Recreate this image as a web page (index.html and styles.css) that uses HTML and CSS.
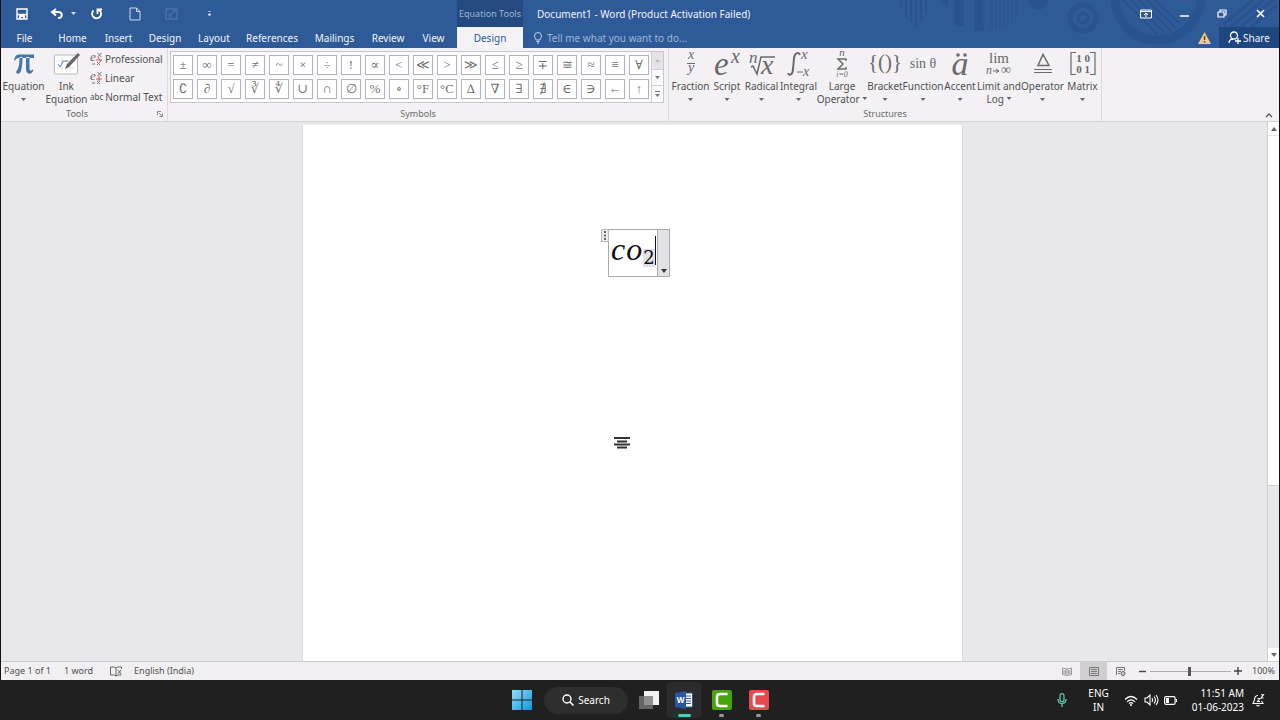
FILE: index.html
```
<!DOCTYPE html>
<html lang="en">
<head>
<meta charset="utf-8">
<title>Document1 - Word</title>
<link rel="stylesheet" href="styles.css">
</head>
<body>
<div class="word">
  <header class="top">
    <svg class="art" width="380" height="47" viewBox="0 0 380 47" fill="none" stroke="#29538f" aria-hidden="true">
      <path d="M2 0v7M7 0v17M12 0v23M17 0v26M22 0v22M27 0v14" stroke-width="2"/>
      <path d="M42 0l7 8V0z" fill="#29538f" stroke="none"/>
      <path d="M60 0v26M80 0v31" stroke-width="9"/>
      <path d="M93 0v30M97 0v30M101 0v29M105 0v28M109 0v26M113 0v23M117 0v19" stroke-width="1"/>
      <circle cx="139" cy="0" r="10" fill="#29538f" stroke="none"/>
      <circle cx="184" cy="18" r="13" stroke-width="5"/><circle cx="184" cy="18" r="5" stroke-width="3"/>
      <path d="M216 0c2 20 16 40 42 40s42-20 44-40" stroke-width="9"/>
      <path d="M224 0l34 34M232 0l34 33M240 0l32 31M248 0l29 28M256 0l26 25" stroke-width="2"/>
      <path d="M324 25l30-25M332 27l32-27M342 27l32-27M352 27l26-22" stroke-width="3"/>
    </svg>
    <div class="quick">
      <button aria-label="Save"><svg width="12" height="12" viewBox="0 0 12 12"><path d="M1 1h10v10H1zM1 6.500h10" fill="none" stroke="#fff" stroke-width="1.400"/><path d="M3 7h6v4H7V9H5v2H3z" fill="#fff"/></svg></button>
      <button aria-label="Undo"><svg width="14" height="12" viewBox="0 0 14 12"><path d="M6 1L2 4l4 3.500M2 4h6c5 0 5 6 0 6" fill="none" stroke="#fff" stroke-width="2"/></svg></button>
      <button aria-label="Undo list"><svg width="5" height="3"><path d="M0 0h5L2.500 3z" fill="#dbe5f3"/></svg></button>
      <button aria-label="Redo"><svg width="13" height="13" viewBox="0 0 13 13"><path d="M3.500 3.500a4.500 4.500 0 1 0 5-.8M7.500 7V2.500H12" fill="none" stroke="#fff" stroke-width="1.800"/></svg></button>
      <button aria-label="New document"><svg width="12" height="14" viewBox="0 0 12 14"><path d="M1 1h6.500L11 4.500V13H1zM7.500 1v3.500H11" fill="none" stroke="#cfdcee"/></svg></button>
      <button aria-label="Edit" disabled><svg width="13" height="12" viewBox="0 0 13 12"><path d="M1 1h11v10H1zM4 8l7-6M4 6l2 3" fill="none" stroke="#4b72aa" stroke-width="1.300"/></svg></button>
      <button aria-label="Customize toolbar"><svg width="5" height="6"><path d="M1 .5h3M1 3h3L2.500 5z" fill="#dbe5f3" stroke="#dbe5f3" stroke-width=".6"/></svg></button>
    </div>
    <div class="context">Equation Tools</div>
    <div class="title">Document1 - Word (Product Activation Failed)</div>
    <div class="window">
      <button aria-label="Ribbon display options"><svg width="12" height="10" viewBox="0 0 12 10"><path d="M.5 1h11v8H.5zM.5 2.500h11M6 8V4M4 6l2-2 2 2" fill="none" stroke="#fff"/></svg></button>
      <button aria-label="Minimize"><svg width="9" height="10"><path d="M0 7h9" stroke="#fff" stroke-width="1.500"/></svg></button>
      <button aria-label="Restore"><svg width="10" height="9" viewBox="0 0 10 9"><path d="M1 3h6v5H1zM3 3V1h6v5H7" fill="none" stroke="#fff" stroke-width="1.200"/></svg></button>
      <button aria-label="Close"><svg width="9" height="9"><path d="M1 1l7 7M8 1L1 8" stroke="#fff" stroke-width="1.700"/></svg></button>
    </div>
    <nav class="tabs">
      <button>File</button><button>Home</button><button>Insert</button><button>Design</button><button>Layout</button><button>References</button><button>Mailings</button><button>Review</button><button>View</button>
    </nav>
    <button class="active-tab">Design</button>
    <label class="tell">
      <svg width="10" height="12" viewBox="0 0 10 12"><path d="M3 8C3 6.500 1.500 6 1.500 4a3.500 3.500 0 0 1 7 0c0 2-1.500 2.500-1.500 4zM3.500 9.500h3M4 11h2" fill="none" stroke="#c3d2e8"/></svg>
      <input type="text" aria-label="Tell me" placeholder="Tell me what you want to do...">
    </label>
    <div class="account">
      <svg width="13" height="12" viewBox="0 0 13 12"><path d="M6.500 0L13 12H0z" fill="#efc987"/><path d="M6.500 4v4M6.500 9v1.500" stroke="#5a3f20" stroke-width="1.400"/></svg>
      <button class="share"><svg width="13" height="13" viewBox="0 0 13 13"><circle cx="6" cy="4.500" r="3.500" fill="none" stroke="#fff" stroke-width="1.300"/><path d="M1 12c0-3 2-4 4-4M7 10h6M10 7v6" fill="none" stroke="#fff" stroke-width="1.300"/></svg>Share</button>
    </div>
  </header>

  <section class="ribbon">
    <div class="group tools">
      <div class="tool-row">
        <button class="big"><svg width="22" height="22" viewBox="0 0 22 22"><path d="M1 7C2 2.500 4 1.500 7 1.500h14v3.500H7C4 5 3 5.500 2 7.500zM6.500 4c0 7-.5 11-3.500 15 1 3 4 2 5-1 1-4 1.500-9 1.500-14zM13 4v12c0 6 6 6 7.500 1l-1-.5c-1.500 2-3 1.500-3-1.500V4z" fill="#4576a8"/></svg><span>Equation</span><i class="caret"></i></button>
        <button class="big"><svg width="26" height="24" viewBox="0 0 26 24"><rect x=".5" y="3" width="23" height="19" rx="1" fill="#fff" stroke="#b9b9bb"/><path d="M3 9h18M3 16h18M8 5v15M16 5v15" stroke="#e3e3e5"/><path d="M4 12l2 3 3-6h5" fill="none" stroke="#5d86ad"/><path d="M24 1l2 2-11 12-4 2 2-5z" fill="#666"/></svg><span>Ink<br>Equation</span></button>
        <div class="small">
          <button><svg width="13" height="14" viewBox="0 0 13 14"><text x="0" y="9" class="ic" font-size="13">e</text><path d="M7.500 1l4 4M11.500 1l-4 4" stroke="#777"/><path d="M6 8h6M8 5l3 5" stroke="#cc5560"/><path d="M2 12h3M7 10l3 3M10 10l-3 3" stroke="#777"/></svg>Professional</button>
          <button><svg width="13" height="14" viewBox="0 0 13 14"><text x="0" y="9" class="ic" font-size="13">e</text><path d="M7.500 1l4 4M11.500 1l-4 4" stroke="#777"/><path d="M6 8h6M9 5v5" stroke="#cc5560"/><path d="M2 12h3M7 10l3 3M10 10l-3 3" stroke="#777"/></svg>Linear</button>
          <button><span class="abc">abc</span>Normal Text</button>
        </div>
      </div>
      <div class="name">Tools</div>
      <svg class="launch" width="6" height="6" viewBox="0 0 6 6"><path d="M.5 4V.5H4M2 2l3 3M5.500 2.500v3h-3" fill="none" stroke="#888"/></svg>
    </div>

    <div class="group symbols">
      <div class="gallery">
        <div class="cells">
          <button>±</button><button>∞</button><button>=</button><button>≠</button><button>~</button><button>×</button><button>÷</button><button>!</button><button>∝</button><button>&lt;</button><button>≪</button><button>&gt;</button><button>≫</button><button>≤</button><button>≥</button><button>∓</button><button>≅</button><button>≈</button><button>≡</button><button>∀</button>
          <button>∁</button><button>∂</button><button>√</button><button>∛</button><button>∜</button><button>∪</button><button>∩</button><button>∅</button><button>%</button><button>∘</button><button>°F</button><button>°C</button><button>∆</button><button>∇</button><button>∃</button><button>∄</button><button>∈</button><button>∋</button><button>←</button><button>↑</button>
        </div>
        <div class="scroll">
          <button aria-label="Up" disabled><svg width="5" height="3"><path d="M0 3h5L2.500 0z" fill="#bbb"/></svg></button>
          <button aria-label="Down"><svg width="5" height="3"><path d="M0 0h5L2.500 3z" fill="#777"/></svg></button>
          <button aria-label="More"><svg width="5" height="6"><path d="M0 .5h5" stroke="#777"/><path d="M0 3h5L2.500 6z" fill="#777"/></svg></button>
        </div>
      </div>
      <div class="name">Symbols</div>
    </div>

    <div class="group structures">
      <div class="struct-row">
        <button><svg width="14" height="26" viewBox="0 0 14 26"><text x="7" y="8" class="ic mid" font-size="14">x</text><path d="M3 12.500h8" stroke="#6a6a6a"/><text x="7" y="21" class="ic mid" font-size="14">y</text></svg><span>Fraction</span><i class="caret"></i></button>
        <button><svg width="28" height="26" viewBox="0 0 28 26"><text x="1" y="24" class="ic" font-size="33">e</text><text x="18" y="12" class="ic" font-size="20">x</text></svg><span>Script</span><i class="caret"></i></button>
        <button><svg width="28" height="26" viewBox="0 0 28 26"><text x="1" y="12" class="ic" font-size="17">n</text><path d="M3 16l2-1 4 8 4-17h14" fill="none" stroke="#6a6a6a" stroke-width="1.500"/><text x="13" y="23" class="ic" font-size="28">x</text></svg><span>Radical</span><i class="caret"></i></button>
        <button><svg width="24" height="26" viewBox="0 0 24 26"><path d="M13 4c-1-3-5-3-6 3L6 18c0 6-4 7-5 4" fill="none" stroke="#6a6a6a" stroke-width="2"/><text x="14" y="8" class="ic" font-size="15">x</text><path d="M10 21h6" stroke="#6a6a6a"/><text x="16" y="25" class="ic" font-size="14">x</text></svg><span>Integral</span><i class="caret"></i></button>
        <button><svg width="16" height="26" viewBox="0 0 16 26"><text x="8" y="5" class="ic mid" font-size="11">n</text><path d="M12 10V8H4l5 5-5 5h8v-2" fill="none" stroke="#6a6a6a" stroke-width="1.500"/><text x="8" y="26" class="ic mid" font-size="8">i=0</text></svg><span>Large<br>Operator <i class="caret"></i></span></button>
        <button><svg width="30" height="26" viewBox="0 0 30 26"><text x="15" y="18" class="ic up mid" font-size="21">{()}</text></svg><span>Bracket</span><i class="caret"></i></button>
        <button><svg width="28" height="26" viewBox="0 0 28 26"><text x="14" y="17" class="ic up mid" font-size="14">sin θ</text></svg><span>Function</span><i class="caret"></i></button>
        <button><svg width="20" height="26" viewBox="0 0 20 26"><text x="10" y="24" class="ic mid" font-size="34">a</text><circle cx="8" cy="4" r="1.800" fill="#6a6a6a"/><circle cx="15" cy="4" r="1.800" fill="#6a6a6a"/></svg><span>Accent</span><i class="caret"></i></button>
        <button><svg width="28" height="26" viewBox="0 0 28 26"><text x="14" y="12" class="ic up mid" font-size="15">lim</text><text x="1" y="23" class="ic" font-size="12">n</text><path d="M8 20h6M11 18l3 2-3 2" stroke="#6a6a6a" fill="none"/><text x="16" y="23" class="ic up" font-size="14">∞</text></svg><span>Limit and<br>Log <i class="caret"></i></span></button>
        <button><svg width="20" height="26" viewBox="0 0 20 26"><path d="M5 14.500l5-11 6 11z" fill="none" stroke="#6a6a6a" stroke-width="1.500"/><path d="M1 18.500h18M1 21.500h18" stroke="#6a6a6a"/></svg><span>Operator</span><i class="caret"></i></button>
        <button><svg width="26" height="26" viewBox="0 0 26 26"><path d="M6 1.500H1v22h5M20 1.500h5v22h-5" fill="none" stroke="#6a6a6a" stroke-width="1.200"/><text x="13" y="11" class="ic up bold mid" font-size="11">1 0</text><text x="13" y="22" class="ic up bold mid" font-size="11">0 1</text></svg><span>Matrix</span><i class="caret"></i></button>
      </div>
      <div class="name">Structures</div>
    </div>
    <button class="collapse" aria-label="Collapse ribbon"><svg width="8" height="5"><path d="M1 4l3-3 3 3" fill="none" stroke="#555" stroke-width="1.300"/></svg></button>
  </section>

  <main class="workspace">
    <div class="canvas">
      <article class="page">
        <div class="equation">
          <button class="handle" aria-label="Move equation"><svg width="2" height="9"><path d="M0 0h2v2H0zM0 3.500h2v2H0zM0 7h2v2H0z" fill="#666"/></svg></button>
          <div class="formula"><span>c</span><span>o</span><span class="sub">2</span></div>
          <button class="options" aria-label="Equation options"><svg width="6" height="4"><path d="M0 0h6L3 4z" fill="#333"/></svg></button>
        </div>
        <svg class="pointer" width="16" height="12"><path d="M0 1h16M3 4.500h10M0 7.500h16M3 10.500h10" stroke="#333" stroke-width="1.800"/></svg>
      </article>
    </div>
    <div class="scrollbar">
      <button aria-label="Scroll up"><svg width="6" height="4"><path d="M0 4h6L3 0z" fill="#666"/></svg></button>
      <div class="thumb"></div>
      <button aria-label="Scroll down"><svg width="6" height="4"><path d="M0 0h6L3 4z" fill="#666"/></svg></button>
    </div>
  </main>

  <footer class="status">
    <span>Page 1 of 1</span><span>1 word</span>
    <svg width="12" height="11" viewBox="0 0 12 11"><path d="M6 2C4 .5 2 1 .5 1v8c2 0 4-.5 5.500 1V2c1-1.500 3-1 5.500-1v2M6 10c1-1 3-1 5.500-1M8 4l3 4M11 4L8 8" fill="none" stroke="#666"/></svg>
    <span>English (India)</span>
    <div class="view">
      <button aria-label="Read mode"><svg width="10" height="9" viewBox="0 0 10 9"><path d="M5 2L.5 1v6.500L5 8.500l4.500-1V1zM5 2v6M2 3v4M3.500 3v4M6.500 3v4M8 3v4" fill="none" stroke="#777" stroke-width=".7"/></svg></button>
      <button class="on" aria-label="Print layout"><svg width="10" height="9" viewBox="0 0 10 9"><path d="M.5.5h9v8h-9zM2 2.500h6M2 4.500h6M2 6.500h6" fill="none" stroke="#777"/></svg></button>
      <button aria-label="Web layout"><svg width="10" height="9" viewBox="0 0 10 9"><path d="M.5 8V.5h8V4M2 2.500h5M2 4.500h3M2 6.500h2" fill="none" stroke="#777"/><circle cx="7" cy="6.500" r="2" fill="#ccc" stroke="#666"/></svg></button>
      <button class="minus" aria-label="Zoom out"><svg width="7" height="7"><path d="M0 3.500h7" stroke="#444" stroke-width="1.400"/></svg></button>
      <input type="range" min="0" max="100" value="49" aria-label="Zoom">
      <button class="plus" aria-label="Zoom in"><svg width="8" height="8"><path d="M0 4h8M4 0v8" stroke="#444" stroke-width="1.400"/></svg></button>
      <span class="percent">100%</span>
    </div>
  </footer>
</div>

<div class="taskbar">
  <div class="apps">
    <button aria-label="Start"><svg width="20" height="20" viewBox="0 0 20 20"><defs><linearGradient id="w" x2="1" y2="1"><stop stop-color="#86e2fb"/><stop offset="1" stop-color="#1593dc"/></linearGradient></defs><path d="M0 0h9.500v9.500H0zM10.500 0H20v9.500h-9.500zM0 10.500h9.500V20H0zM10.500 10.500H20V20h-9.500z" fill="url(#w)"/></svg></button>
    <button class="search"><svg width="12" height="12" viewBox="0 0 12 12"><circle cx="5" cy="5" r="4" fill="none" stroke="#fff" stroke-width="1.400"/><path d="M8 8l3.500 3.500" stroke="#fff" stroke-width="1.600"/></svg>Search</button>
    <button aria-label="Task view"><svg width="20" height="19" viewBox="0 0 20 19"><path d="M5 0h15v14H5z" fill="#f2f2f2"/><path d="M0 5h14v13H0z" fill="#777" fill-opacity=".8"/></svg></button>
    <button class="current" aria-label="Word"><svg width="18" height="18" viewBox="0 0 18 18"><path d="M8 2h9.500v14H8z" fill="#fff" stroke="#2c5899"/><path d="M11 5h5M11 7.500h5M11 10h5M11 12.500h5" stroke="#2c5899"/><path d="M0 2l11-2v18L0 16z" fill="#2b57a0"/><text x="5.500" y="12" class="logo">W</text></svg></button>
    <button class="running" aria-label="Camtasia"><svg width="20" height="20" viewBox="0 0 20 20"><rect width="20" height="20" rx="2" fill="#45a50b"/><path d="M15.500 4H8Q5 4 5 7v6q0 3 3 3h7.500" fill="none" stroke="#fff" stroke-width="2.600"/></svg></button>
    <button class="running" aria-label="Camtasia Recorder"><svg width="20" height="20" viewBox="0 0 20 20"><rect width="20" height="20" rx="2" fill="#e44a4d"/><path d="M15.500 4H8Q5 4 5 7v6q0 3 3 3h7.500" fill="none" stroke="#fff" stroke-width="2.600"/></svg></button>
  </div>
  <div class="tray">
    <svg width="10" height="14" viewBox="0 0 10 14"><rect x="3" y=".7" width="4" height="8" rx="2" fill="none" stroke="#5fd3b7" stroke-width="1.200"/><path d="M1 6c0 6 8 6 8 0M5 10.500V14" fill="none" stroke="#5fd3b7" stroke-width="1.200"/></svg>
    <div class="lang">ENG<br>IN</div>
    <div class="net">
      <svg width="14" height="11" viewBox="0 0 14 11"><path d="M1 4.500q6-6 12 0M3 6.800q4-4 8 0M5 8.700q2-2 4 0" fill="none" stroke="#fff" stroke-width="1.200"/><circle cx="7" cy="10" r="1" fill="#fff"/></svg>
      <svg width="14" height="12" viewBox="0 0 14 12"><path d="M1 4h2l3-3v10L3 8H1zM8 4q1.500 2 0 4M10 2.500q3 3.500 0 7M12 1q4 5 0 10" fill="none" stroke="#fff" stroke-width="1.100"/></svg>
      <svg width="13" height="9" viewBox="0 0 13 9"><rect x=".6" y=".6" width="10.500" height="7.800" rx="1.500" fill="none" stroke="#fff" stroke-width="1.200"/><path d="M2 2h3v5H2zM12 3h1v3h-1z" fill="#fff"/></svg>
    </div>
    <div class="clock">11:51 AM<br>01-06-2023</div>
    <svg width="12" height="13" viewBox="0 0 12 13"><path d="M6 1.500C3 1.500 2.500 4 2.500 6L1 9.500h10L9.500 7M4.500 11q1.500 2 3 0M5.500 4.500H8l-2.500 3H8M9 .8h2.500L9 4h2.500" fill="none" stroke="#fff" stroke-width="1.100"/></svg>
  </div>
</div>
</body>
</html>
```
FILE: styles.css
```
* { box-sizing: border-box; }
body {
  margin: 0;
  height: 100vh;
  display: flex;
  flex-direction: column;
  background: #202020;
  font: 10px/14px "Noto Sans", "Open Sans", sans-serif;
  color: #505050;
}
button {
  border: 0;
  padding: 0;
  background: none;
  font: inherit;
  color: inherit;
  display: flex;
  align-items: center;
  justify-content: center;
}
svg { display: block; flex: none; overflow: visible; }
.word {
  flex: 1;
  min-height: 0;
  display: flex;
  flex-direction: column;
  border: solid #111;
  border-width: 0 1px;
  background: #f1eff1;
}

/* Title bar and tabs */
.top {
  position: relative;
  display: grid;
  grid-template-columns: 456px 66px 1fr auto;
  grid-template-rows: 27px 21px;
  background: #2f5a98;
  color: #f0f4fa;
}
.art { position: absolute; right: 0; top: 0; overflow: hidden; }
.quick { display: grid; grid-template-columns: 41px 30px 2px 44px 33px 41px 35px; }
.context {
  display: flex;
  align-items: center;
  justify-content: center;
  background: #244a80;
  color: #9db5d6;
  font-size: 9px;
  white-space: nowrap;
}
.title { padding: 7px 0 0 14px; white-space: nowrap; }
.window { position: relative; display: grid; grid-template-columns: repeat(4, 38px); }
.tabs { display: grid; grid-template-columns: 47px 49px 43px 50px 48px 68px 57px 50px 41px; }
.active-tab { background: #f3f2f5; color: #2f5a98; }
.tell { display: flex; align-items: center; gap: 4px; padding-left: 10px; }
.tell input {
  width: 200px;
  border: 0;
  padding: 0;
  background: none;
  font: inherit;
  color: #fff;
}
.tell input::placeholder { color: #9db5d6; opacity: 1; }
.account { position: relative; display: flex; align-items: center; justify-content: flex-end; gap: 8px; }
.share { width: 60px; height: 21px; gap: 2px; background: #1f477f; }

/* Ribbon */
.ribbon { display: flex; height: 74px; border-bottom: 1px solid #d4d2d5; background: #f3f1f4; }
.group {
  position: relative;
  display: flex;
  flex-direction: column;
  border-right: 1px solid #dcdadd;
}
.name { margin-top: auto; font-size: 9px; line-height: 14px; text-align: center; color: #6a6a6a; }
.tools { width: 167px; }
.symbols { width: 501px; }
.structures { width: 433px; }
.tools .name { padding-right: 14px; }
.tool-row { display: grid; grid-template-columns: 45px 41px 1fr; padding-top: 3px; }
.big, .struct-row button { flex-direction: column; justify-content: flex-start; line-height: 13px; }
.big svg { height: 26px; margin-bottom: 3px; }
.big span { text-align: center; }
.small { display: flex; flex-direction: column; gap: 5px; padding: 1px 0 0 3px; }
.small button { justify-content: flex-start; gap: 2px; height: 14px; white-space: nowrap; }
.abc { font-size: 8px; }
.launch { position: absolute; right: 4px; bottom: 4px; }
.caret {
  display: inline-block;
  width: 5px;
  height: 3px;
  background: #666;
  clip-path: polygon(0 0, 100% 0, 50% 100%);
}
button > .caret { margin-top: 5px; }
span > .caret { vertical-align: 3px; }
.ic { font-family: "Liberation Serif", serif; font-style: italic; fill: #6a6a6a; }
.up { font-style: normal; }
.bold { font-weight: bold; }
.mid { text-anchor: middle; }
.gallery {
  display: flex;
  justify-content: space-between;
  width: 494px;
  margin: 3px 0 0 2px;
  border: 1px solid #c9c7ca;
  background: #fbfafc;
}
.cells { display: grid; grid-template-columns: repeat(20, 20px); grid-auto-rows: 20px; gap: 4px; padding: 3px 2px; }
.cells button {
  border: 1px solid #b4b2b6;
  background: #fff;
  font: 13px/16px "Liberation Serif", "DejaVu Serif", serif;
  color: #707070;
}
.scroll { width: 12px; display: grid; grid-template-rows: repeat(3, 1fr); border-left: 1px solid #d0ced1; }
.scroll button + button { border-top: 1px solid #d0ced1; }
.scroll button:disabled { background: #e5e3e6; }
.struct-row {
  display: grid;
  grid-template-columns: 39px 34px 35px 39px 48px 38px 38px 36px 42px 45px 35px;
  padding: 3px 0 0 2px;
}
.struct-row svg { margin-bottom: 3px; }
.struct-row span { text-align: center; white-space: nowrap; }
.collapse { margin: auto 6px 3px auto; }

/* Document */
.workspace { flex: 1; min-height: 0; display: flex; background: #e8e7ea; }
.canvas { flex: 1; display: flex; justify-content: center; padding: 3px 3px 0 0; }
.page { position: relative; width: 661px; background: #fff; border: solid #dbd9dc; border-width: 0 1px; padding: 104px 0 0 305px; }
.equation { position: relative; display: flex; width: 62px; height: 48px; border: 1px solid #a9a9ab; }
.handle { position: absolute; left: -8px; top: -1px; width: 8px; height: 13px; border: 1px solid #b9b9bb; background: #ececee; }
.formula {
  flex: 1;
  display: flex;
  gap: 1px;
  padding-left: 2px;
  font: italic 32px/38px "Liberation Serif", serif;
  color: #111;
}
.sub { font: 18px/18px "DejaVu Serif", serif; height: 18px; margin-top: 19px; background: #e1e1e8; }
.formula::after { content: ""; width: 1px; height: 29px; margin-top: 6px; margin-left: -1px; background: #111; }
.options { align-items: flex-end; width: 12px; padding-bottom: 3px; border-left: 1px solid #a9a9ab; background: #e2e1e5; }
.pointer { position: absolute; left: 311px; top: 312px; }
.scrollbar { width: 12px; display: flex; flex-direction: column; background: #e8e7ea; border-left: 1px solid #cfcdd0; }
.scrollbar button { height: 13px; background: #fff; }
.scrollbar .thumb { flex: 0 0 65%; margin: 1px 0 auto; background: #fff; border-bottom: 1px solid #cfcdd0; }

/* Status bar */
.status { display: flex; align-items: center; height: 19px; padding: 0 4px 0 3px; border-top: 1px solid #cbc8cf; font-size: 9px; white-space: nowrap; }
.status > span { margin-right: 13px; }
.status > svg { margin: 0 12px 0 4px; }
.view { margin-left: auto; display: flex; align-items: center; height: 18px; }
.view button { width: 27px; height: 18px; }
.view .on { background: #d0ced1; }
.view .minus { width: 16px; }
.view .plus { width: 14px; }
.view input { appearance: none; width: 81px; height: 10px; margin: 0; background: linear-gradient(#aaa, #aaa) center / 100% 1px no-repeat; }
.view input::-webkit-slider-thumb { appearance: none; width: 3px; height: 9px; background: #555; }
.percent { margin-left: 7px; }

/* Taskbar */
.taskbar { position: relative; display: flex; height: 40px; align-items: center; justify-content: center; color: #fff; }
.apps { display: flex; align-items: center; height: 40px; }
.apps button { position: relative; width: 37px; height: 36px; }
.apps .search { width: 84px; height: 27px; margin: 0 2px 0 4px; border-radius: 14px; background: #2e2e2e; gap: 4px; }
.apps .current { width: 34px; margin-right: 2px; border-radius: 4px; background: #2b2b2d; }
.current::after, .running::after { content: ""; position: absolute; bottom: 1px; width: 5px; height: 3px; border-radius: 2px; background: #999; }
.current::after { width: 13px; background: #4cd0b5; }
.logo { font: bold 8px "Open Sans", sans-serif; fill: #fff; text-anchor: middle; }
.tray { position: absolute; right: 16px; top: 0; height: 40px; display: flex; align-items: center; gap: 15px; }
.lang { text-align: center; padding-left: 6px; }
.net { display: flex; align-items: center; gap: 6px; }
.clock { text-align: right; }
.tray > :last-child { margin-left: -7px; }
```
